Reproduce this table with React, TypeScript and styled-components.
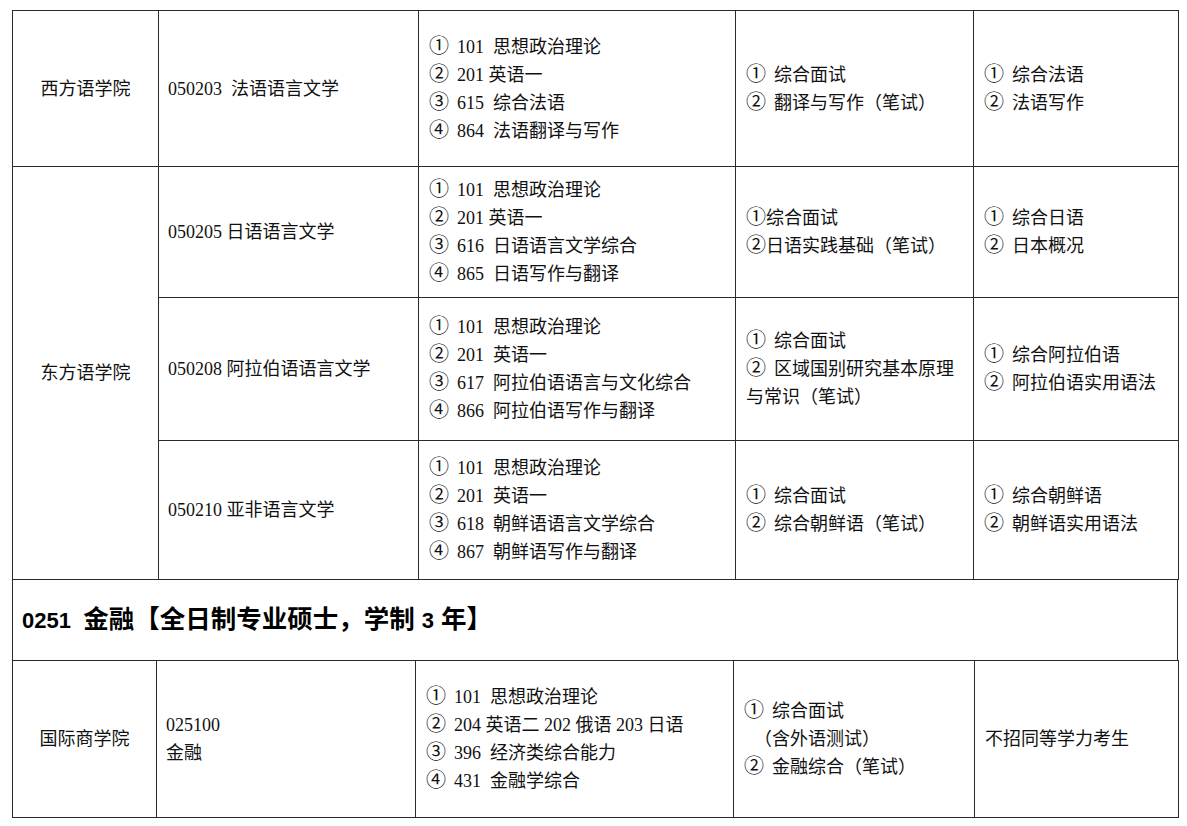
import React from 'react';
import styled, { createGlobalStyle } from 'styled-components';

const GlobalStyle = createGlobalStyle`
  html, body { margin: 0; padding: 0; background: #fff; }
  body {
    font-family: "Liberation Serif", "Noto Sans CJK SC", serif;
    color: #111;
  }
`;

const Page = styled.div`
  padding: 10px 0 0 12px;
  width: 1166px;
`;

const Table = styled.table`
  width: 1166px;
  border-collapse: collapse;
  table-layout: fixed;
`;

const Col = styled.col<{ $w: number }>`
  width: ${(p) => p.$w}px;
`;

const Row = styled.tr<{ $h: number }>`
  height: ${(p) => p.$h}px;
`;

const Cell = styled.td<{ $center?: boolean; $pad?: number }>`
  border: 1px solid #2a2a2a;
  padding: 0 0 0 ${(p) => p.$pad ?? 10}px;
  font-size: 18px;
  line-height: 28px;
  vertical-align: middle;
  text-align: ${(p) => (p.$center ? 'center' : 'left')};
  white-space: pre;
`;

const Banner = styled.div`
  height: 80px;
  border-left: 1px solid #2a2a2a;
  border-right: 1px solid #2a2a2a;
  display: flex;
  align-items: center;
  padding-left: 9px;
`;

const BannerText = styled.h2`
  margin: 0;
  font-family: "Liberation Sans", "Noto Sans CJK SC", sans-serif;
  font-weight: bold;
  font-size: 25.5px;
  line-height: 30px;
  color: #000;
  white-space: pre;
`;

const Latin = styled.span`
  font-size: 22px;
`;

const Line = styled.div<{ $indent?: number }>`
  height: 28px;
  padding-left: ${(p) => p.$indent ?? 0}px;
`;

const Mark = styled.span<{ $tight?: boolean }>`
  display: inline-block;
  width: ${(p) => (p.$tight ? 20 : 28)}px;
  font-size: 20px;
  line-height: 20px;
`;

type Major = {
  h: number;
  major: string[];
  exams: string[];
  interview: string[];
  extra: string[];
};

const western: Major = {
  h: 156,
  major: ['050203  法语语言文学'],
  exams: ['① 101  思想政治理论', '② 201 英语一', '③ 615  综合法语', '④ 864  法语翻译与写作'],
  interview: ['① 综合面试', '② 翻译与写作（笔试）'],
  extra: ['① 综合法语', '② 法语写作'],
};

const eastern: Major[] = [
  {
    h: 131,
    major: ['050205 日语语言文学'],
    exams: ['① 101  思想政治理论', '② 201 英语一', '③ 616  日语语言文学综合', '④ 865  日语写作与翻译'],
    interview: ['①综合面试', '②日语实践基础（笔试）'],
    extra: ['① 综合日语', '② 日本概况'],
  },
  {
    h: 143,
    major: ['050208 阿拉伯语语言文学'],
    exams: ['① 101  思想政治理论', '② 201  英语一', '③ 617  阿拉伯语语言与文化综合', '④ 866  阿拉伯语写作与翻译'],
    interview: ['① 综合面试', '② 区域国别研究基本原理', '与常识（笔试）'],
    extra: ['① 综合阿拉伯语', '② 阿拉伯语实用语法'],
  },
  {
    h: 139,
    major: ['050210 亚非语言文学'],
    exams: ['① 101  思想政治理论', '② 201  英语一', '③ 618  朝鲜语语言文学综合', '④ 867  朝鲜语写作与翻译'],
    interview: ['① 综合面试', '② 综合朝鲜语（笔试）'],
    extra: ['① 综合朝鲜语', '② 朝鲜语实用语法'],
  },
];

const finance: Major = {
  h: 157,
  major: ['025100', '金融'],
  exams: ['① 101  思想政治理论', '② 204 英语二 202 俄语 203 日语', '③ 396  经济类综合能力', '④ 431  金融学综合'],
  interview: ['① 综合面试', '（含外语测试）', '② 金融综合（笔试）'],
  extra: ['不招同等学力考生'],
};

function Lines({ items }: { items: string[] }) {
  return (
    <>
      {items.map((t, i) => {
        const m = t.match(/^([①②③④])( ?)(.*)$/);
        if (m) {
          return (
            <Line key={i}>
              <Mark $tight={m[2] === ''}>{m[1]}</Mark>
              {m[3]}
            </Line>
          );
        }
        return (
          <Line key={i} $indent={t.startsWith('（') ? 10 : 0}>
            {t}
          </Line>
        );
      })}
    </>
  );
}

function MajorCells({ m }: { m: Major }) {
  return (
    <>
      <Cell $pad={9}><Lines items={m.major} /></Cell>
      <Cell><Lines items={m.exams} /></Cell>
      <Cell><Lines items={m.interview} /></Cell>
      <Cell><Lines items={m.extra} /></Cell>
    </>
  );
}

export default function App() {
  return (
    <Page>
      <GlobalStyle />
      <Table>
        <colgroup>
          <Col $w={146} />
          <Col $w={260} />
          <Col $w={317} />
          <Col $w={238} />
          <Col $w={205} />
        </colgroup>
        <tbody>
          <Row $h={western.h}>
            <Cell $center $pad={0}>西方语学院</Cell>
            <MajorCells m={western} />
          </Row>
          {eastern.map((m, i) => (
            <Row $h={m.h} key={i}>
              {i === 0 && (
                <Cell $center $pad={0} rowSpan={3}>东方语学院</Cell>
              )}
              <MajorCells m={m} />
            </Row>
          ))}
        </tbody>
      </Table>
      <Banner>
        <BannerText>
          <Latin>0251  </Latin>金融【全日制专业硕士，学制 <Latin>3</Latin> 年】
        </BannerText>
      </Banner>
      <Table>
        <colgroup>
          <Col $w={144} />
          <Col $w={259} />
          <Col $w={318} />
          <Col $w={241} />
          <Col $w={204} />
        </colgroup>
        <tbody>
          <Row $h={finance.h}>
            <Cell $center $pad={0}>国际商学院</Cell>
            <MajorCells m={finance} />
          </Row>
        </tbody>
      </Table>
    </Page>
  );
}
